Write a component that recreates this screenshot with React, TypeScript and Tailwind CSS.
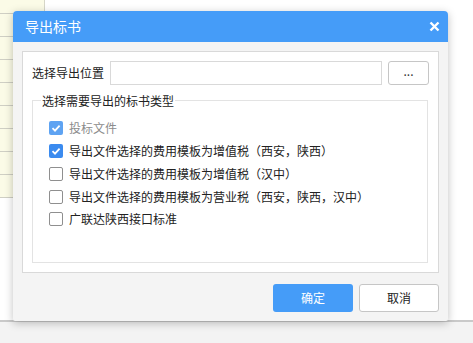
import React from "react";

const font = { fontFamily: '"Microsoft YaHei", "Noto Sans CJK SC", "Noto Sans", sans-serif' };

const options = [
  { label: "投标文件", checked: true, disabled: true },
  { label: "导出文件选择的费用模板为增值税（西安，陕西）", checked: true },
  { label: "导出文件选择的费用模板为增值税（汉中）", checked: false },
  { label: "导出文件选择的费用模板为营业税（西安，陕西，汉中）", checked: false },
  { label: "广联达陕西接口标准", checked: false },
];

function Check({ checked, disabled }: { checked: boolean; disabled?: boolean }) {
  if (!checked) {
    return <span className="w-[14px] h-[14px] rounded-[2px] border border-[#8f8f8f] bg-white shrink-0" />;
  }
  return (
    <span
      className={`w-[14px] h-[14px] rounded-[2px] shrink-0 flex items-center justify-center ${
        disabled ? "bg-[#5ea3f2]" : "bg-[#3b8bef]"
      }`}
    >
      <svg width="10" height="10" viewBox="0 0 10 10">
        <path d="M1.5 5.2 L4 7.6 L8.6 2.6" fill="none" stroke="#fff" strokeWidth="1.8" />
      </svg>
    </span>
  );
}

export default function App() {
  return (
    <div className="relative w-[473px] h-[343px] overflow-hidden bg-white flex flex-col" style={font}>
      {/* sheet behind */}
      <div className="h-[320px] flex">
        <div className="w-[45px] border-r border-[#d6d6c8]">
          <div className="h-[14px] bg-[#fbfbe7] border-b border-[#cfcfc4]" />
          {Array.from({ length: 8 }).map((_, i) => (
            <div key={i} className="h-[23px] bg-[#fbfbe7] border-b border-[#cfcfc4]" />
          ))}
        </div>
      </div>
      <div className="flex-1 border-t-2 border-[#c9c9c9] bg-[#f3f3f3]" />

      {/* dialog */}
      <div className="absolute left-[13px] top-[11px] w-[435px] h-[310px] bg-[#f4f4f4] rounded-t-[4px] rounded-b-[2px] shadow-[0_2px_8px_rgba(0,0,0,0.25)] flex flex-col">
        <div className="h-[31px] bg-[#459cf8] rounded-t-[4px] flex items-center justify-between pl-[12px] pr-[8px]">
          <span className="text-white text-[14px]">导出标书</span>
          <svg width="11" height="11" viewBox="0 0 11 11">
            <path d="M1.5 1.5 L9.5 9.5 M9.5 1.5 L1.5 9.5" stroke="#fff" strokeWidth="2.4" />
          </svg>
        </div>
        <div className="flex-1 p-[9px] flex flex-col">
          <div className="h-[222px] bg-white border border-[#d9d9d9] pt-[9px] px-[9px] flex flex-col">
            <div className="flex items-center h-[24px]">
              <span className="text-[12px] text-[#222] w-[78px]">选择导出位置</span>
              <div className="w-[273px] h-[24px] border border-[#d9d9d9] bg-white" />
              <button className="ml-[6px] w-[41px] h-[24px] border border-[#c6c6c6] rounded-[3px] bg-white text-[12px] text-[#333] leading-none pb-[4px]">
                ...
              </button>
            </div>
            <fieldset className="mt-[8px] h-[170px] border border-[#e3e3e3] mr-[1px]">
              <legend className="ml-[8px] px-[1px] text-[12px] text-[#222] leading-[15px]">选择需要导出的标书类型</legend>
              <div className="pl-[16px] pt-[9px] flex flex-col">
                {options.map((o) => (
                  <div key={o.label} className="h-[22.75px] flex items-center gap-[6px]">
                    <Check checked={o.checked} disabled={o.disabled} />
                    <span className={`text-[12px] ${o.disabled ? "text-[#8c8c8c]" : "text-[#222]"}`}>{o.label}</span>
                  </div>
                ))}
              </div>
            </fieldset>
          </div>
          <div className="mt-[11px] flex justify-end gap-[6px]">
            <button className="w-[80px] h-[28px] rounded-[3px] bg-[#459cf8] text-white text-[12px]">确定</button>
            <button className="w-[80px] h-[28px] rounded-[3px] bg-white border border-[#c6c6c6] text-[#222] text-[12px]">取消</button>
          </div>
        </div>
      </div>
    </div>
  );
}
